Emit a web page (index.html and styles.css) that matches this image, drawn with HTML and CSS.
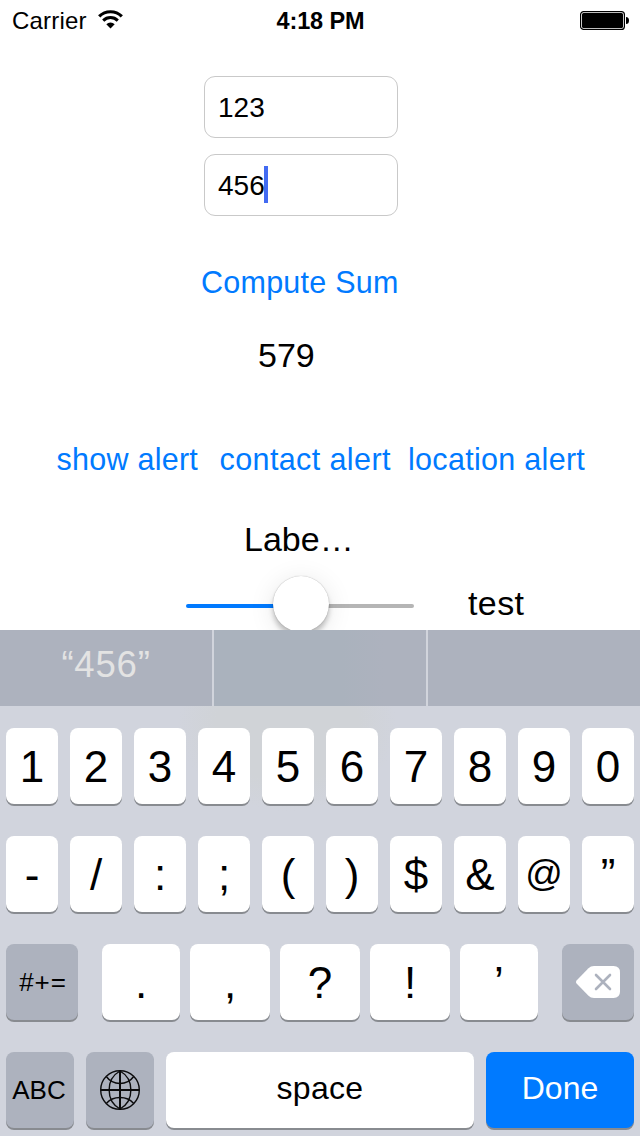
FILE: index.html
```html
<!DOCTYPE html>
<html lang="en">
<head>
<meta charset="utf-8">
<title>Compute Sum</title>
<link rel="stylesheet" href="styles.css">
</head>
<body>
<main class="screen">
  <header class="status">
    <div class="status-left">
      <span class="carrier">Carrier</span>
      <svg class="wifi" width="25" height="19" viewBox="0 0 25 19" fill="none" stroke="#000">
        <path d="M1.200 6.400a16 16 0 0 1 22.600 0" stroke-width="3.200"/>
        <path d="M5.200 10.600a10.300 10.300 0 0 1 14.600 0" stroke-width="3"/>
        <path d="M8.300 14.200a6 6 0 0 1 8.400 0L12.500 18.400z" fill="#000" stroke="none"/>
      </svg>
    </div>
    <span class="clock">4:18 PM</span>
    <div class="status-right">
      <svg width="49" height="19" viewBox="0 0 49 19">
        <rect x=".6" y=".6" width="43.8" height="17.8" rx="3" fill="#fff" stroke="#000" stroke-width="1.2"/>
        <rect x="2" y="2" width="41" height="15" rx="1.5"/>
        <path d="M46 6a3 3.5 0 0 1 0 7z"/>
      </svg>
    </div>
  </header>
  <section class="content">
    <div class="field">123</div>
    <div class="field">456<span class="caret"></span></div>
    <div class="action compute">Compute Sum</div>
    <div class="result">579</div>
    <nav class="alerts">
      <span class="action show">show alert</span>
      <span class="action contact">contact alert</span>
      <span class="action location">location alert</span>
    </nav>
    <div class="label">Labe…</div>
    <div class="slider-row">
      <div class="slider"><span class="filled"></span><span class="rest"></span><span class="thumb"></span></div>
      <span class="test">test</span>
    </div>
  </section>
  <section class="keyboard">
    <div class="suggestions"><span class="quoted">“456”</span><span></span><span></span></div>
    <div class="keys">
      <div class="row tens">
        <span class="key">1</span><span class="key">2</span><span class="key">3</span><span class="key">4</span><span class="key">5</span><span class="key">6</span><span class="key">7</span><span class="key">8</span><span class="key">9</span><span class="key">0</span>
      </div>
      <div class="row tens">
        <span class="key">-</span><span class="key">/</span><span class="key">:</span><span class="key">;</span><span class="key">(</span><span class="key">)</span><span class="key">$</span><span class="key">&amp;</span><span class="key at">@</span><span class="key">”</span>
      </div>
      <div class="row punctuation">
        <span class="key gray small more">#+=</span>
        <span class="key first">.</span><span class="key">,</span><span class="key">?</span><span class="key">!</span><span class="key">’</span>
        <span class="key gray delete">
          <svg width="44" height="32" viewBox="0 0 44 32">
            <path d="M.8 14.2 12.5 2.2Q14.700 0 18 0H37.500Q44 0 44 6.500V25.500Q44 32 37.500 32H18Q14.700 32 12.500 29.800L.8 17.800Q-.8 16 .8 14.200z" fill="#fff"/>
            <path d="m20 9 14 14M34 9 20 23" stroke="#adb2be" stroke-width="2.600" stroke-linecap="round"/>
          </svg>
        </span>
      </div>
      <div class="row bottom">
        <span class="key gray small abc">ABC</span>
        <span class="key gray">
          <svg width="40" height="40" viewBox="0 0 40 40" fill="none" stroke="#0b0b0c" stroke-width="1.400">
            <circle cx="20" cy="20" r="19.300"/>
            <path d="M20 1v38M1 20h38" stroke-width="2"/>
            <path d="M20 1C5.500 9 5.500 31 20 39M20 1C34.500 9 34.500 31 20 39"/>
            <path d="M6.300 6.500C13 15.800 27 15.800 33.700 6.500M6.300 33.500C13 25.500 27 25.500 33.700 33.500"/>
          </svg>
        </span>
        <span class="key word">space</span>
        <span class="key word done">Done</span>
      </div>
    </div>
  </section>
</main>
</body>
</html>
```
FILE: styles.css
```css
* { box-sizing: border-box; }

body {
  margin: 0;
  background: #fff;
  color: #000;
  font-family: "Liberation Sans", Arial, sans-serif;
}

.screen {
  width: 640px;
  height: 1136px;
  display: flex;
  flex-direction: column;
  overflow: hidden;
}

.status {
  height: 42px;
  flex: none;
  display: grid;
  grid-template-columns: 1fr auto 1fr;
  align-items: center;
  padding: 0 11px 0 12px;
  font-size: 24px;
  line-height: 42px;
}

.status-left { display: flex; align-items: center; gap: 11px; }
.carrier { letter-spacing: 0.2px; }
.wifi { margin-bottom: 3px; }
.clock { font-weight: bold; font-size: 23.500px; letter-spacing: -0.1px; }
.status-right { display: flex; justify-content: flex-end; margin-bottom: 1px; }

.content {
  height: 588px;
  flex: none;
  display: flex;
  flex-direction: column;
  align-items: flex-start;
  padding-top: 34px;
  overflow: hidden;
}

.field {
  width: 194px;
  height: 62px;
  flex: none;
  display: flex;
  align-items: center;
  margin: 0 0 16px 204px;
  padding: 1px 0 0 13px;
  border: 1px solid #c9c9c9;
  border-radius: 11px;
  font-size: 28px;
}

.caret { width: 4px; height: 37px; margin: -2px 0 0 -1px; background: #426bf2; }

.action { color: #007aff; font-size: 30.500px; line-height: 40px; white-space: nowrap; }
.compute { margin: 30px 0 0 201px; letter-spacing: 0.25px; }
.result { margin: 33px 0 0 258px; font-size: 34px; line-height: 40px; }

.alerts { display: flex; margin: 64px 0 0 56.500px; }
.show { width: 163px; letter-spacing: 0.25px; }
.contact { width: 188.500px; letter-spacing: 0.4px; }
.location { letter-spacing: 0.3px; }

.label { margin: 40px 0 0 244px; font-size: 34px; line-height: 40px; }

.slider-row { display: flex; align-items: center; height: 56px; flex: none; margin: 16px 0 0 186px; }
.slider { position: relative; display: flex; width: 228px; height: 4px; margin-top: 6px; }
.filled { width: 115px; background: #007aff; border-radius: 2px 0 0 2px; }
.rest { flex: 1; background: #b5b5b5; border-radius: 0 2px 2px 0; }
.thumb {
  position: absolute;
  left: 87px;
  top: -28px;
  width: 56px;
  height: 56px;
  border-radius: 50%;
  background: #fff;
  box-shadow: 0 0 1px rgba(0,0,0,.35), 0 5px 5px rgba(0,0,0,.22), 0 4px 26px rgba(0,0,0,.10);
}
.test { margin-left: 54px; font-size: 34px; line-height: 40px; letter-spacing: 0.4px; }

.keyboard { flex: 1; display: flex; flex-direction: column; background: #d1d4dd; }

.suggestions {
  height: 76px;
  flex: none;
  display: grid;
  grid-template-columns: 212px 212px 212px;
  gap: 2px;
  background: #d1d4dc;
}
.suggestions { grid-template-columns: 212px 212px 1fr; }
.suggestions span { background: #adb2be; }
.suggestions span:nth-child(2) { background: linear-gradient(90deg, #aab2bd 60%, #adb2be 80%); }
.suggestions .quoted {
  text-align: center;
  font-size: 36.500px;
  line-height: 70px;
  letter-spacing: 0.8px;
  color: #e3e3e3;
}

.keys {
  flex: 1;
  display: flex;
  flex-direction: column;
  gap: 32px;
  padding: 22px 6px 0;
  background: radial-gradient(ellipse 110px 85px at 287px 20px, #d0d3d7 65%, #d1d4dd 100%);
}
.row { display: grid; }
.tens { grid-template-columns: repeat(10, 52px); gap: 12px; }
.punctuation { grid-template-columns: 72px 4px 78px 80px 80px 80px 78px 4px 72px; gap: 10px; }
.bottom { grid-template-columns: 68px 68px 308px 148px; gap: 12px; }

.key {
  height: 76px;
  display: flex;
  align-items: center;
  justify-content: center;
  padding-top: 2px;
  border-radius: 8px;
  background: #fff;
  box-shadow: 0 2px 0 #888b90;
  font-size: 44px;
  line-height: 50px;
}
.first { grid-column: 3; }
.delete { grid-column: 9; }
.gray { background: #adb2be; padding-top: 0; }
.small { font-size: 26px; }
.more { padding-left: 2px; letter-spacing: 0.9px; }
.abc { padding-right: 2px; }
.at { font-size: 37px; padding-bottom: 2px; }
.word { font-size: 32px; padding: 0 0 4px; letter-spacing: 0.3px; }
.done { color: #fff; background: #007aff; letter-spacing: 0; }
```
